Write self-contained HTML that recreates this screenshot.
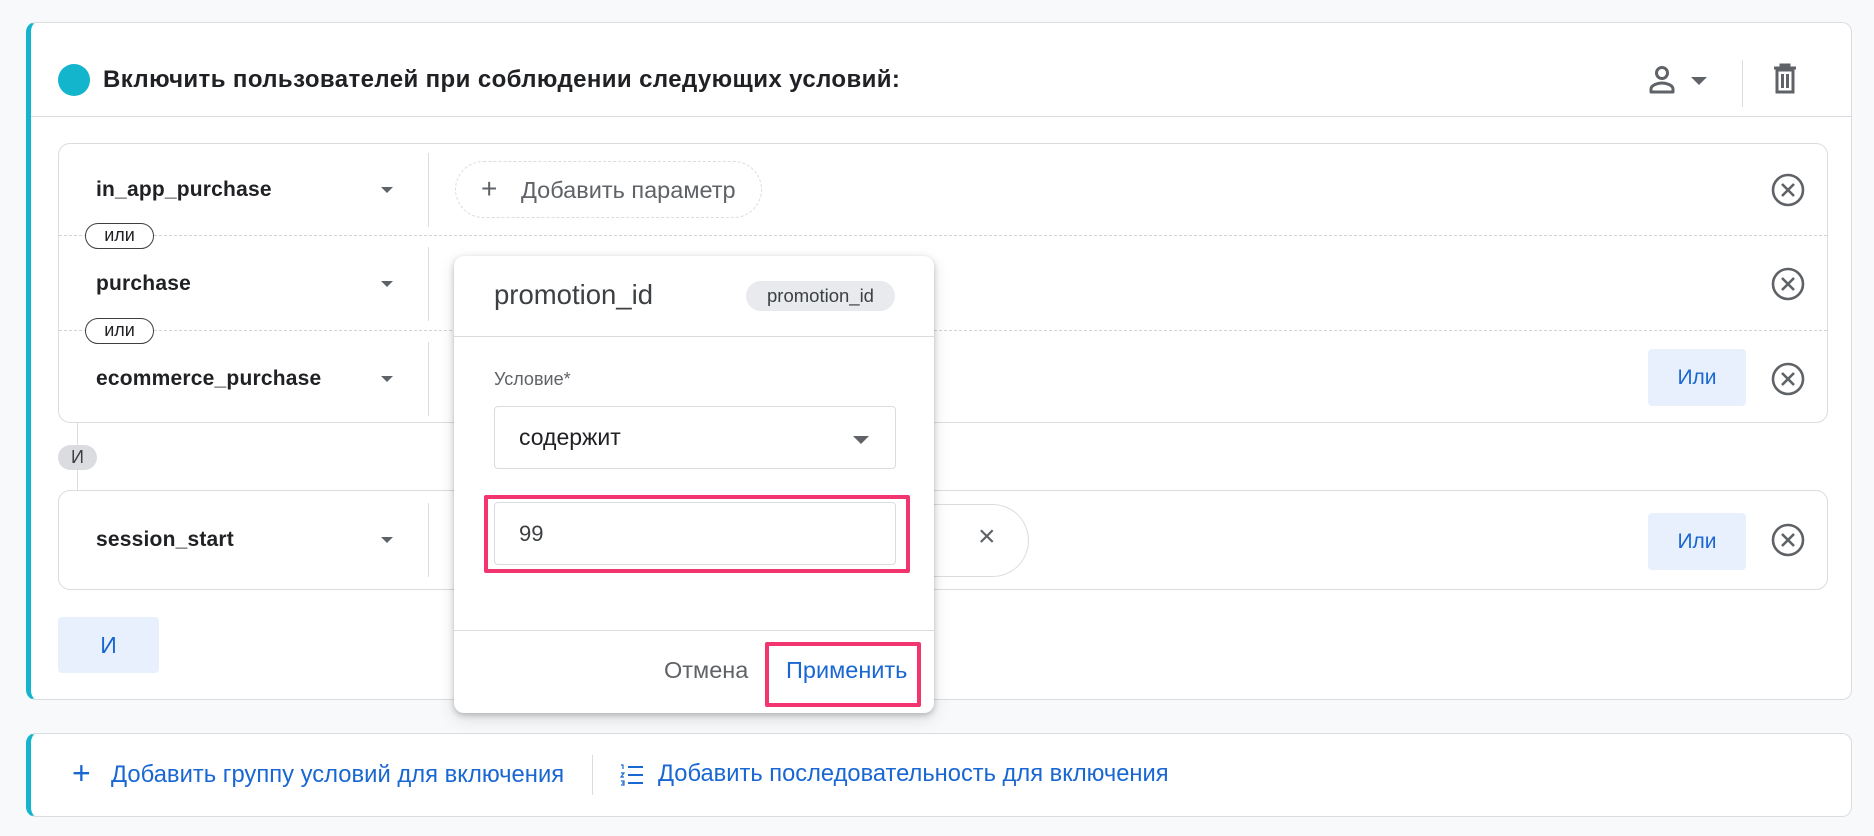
<!DOCTYPE html>
<html><head><meta charset="utf-8"><style>
*{box-sizing:border-box;margin:0;padding:0}
body{width:1874px;height:836px;background:#f8f9fa;font-family:"Liberation Sans",Roboto,sans-serif;color:#202124;position:relative;overflow:hidden}
.abs{position:absolute}
.card{position:absolute;background:#fff;border:1px solid #dadce0;border-left:5px solid #12b5cb;border-radius:10px}
.grp{position:absolute;border:1px solid #dadce0;border-radius:12px;background:#fff}
.ev{position:absolute;left:96px;font-size:21px;font-weight:bold;color:#202124;transform:translateY(-50%);letter-spacing:0.2px}
.caret{position:absolute;width:0;height:0;border-left:6px solid transparent;border-right:6px solid transparent;border-top:6px solid #5f6368}
.vd{position:absolute;width:1px;background:#dadce0}
.pill{position:absolute;border:1.5px solid #3c4043;border-radius:13px;font-size:18px;color:#202124;text-align:center;line-height:22px;background:#fff}
.orb{position:absolute;width:98px;height:57px;background:#e8f0fe;border-radius:4px;color:#1967d2;font-size:21px;text-align:center;line-height:57px}
.dash{position:absolute;border-top:1px dashed #d0d3d7;height:0}
</style></head><body>

<div class="card" style="left:26px;top:22px;width:1826px;height:678px"></div>
<div class="abs" style="left:58px;top:64px;width:32px;height:32px;border-radius:50%;background:#12b5cb"></div>
<div class="abs" style="left:103px;top:66px;font-size:24px;font-weight:bold;color:#202124;letter-spacing:0.4px">Включить пользователей при соблюдении следующих условий:</div>
<svg class="abs" style="left:1647px;top:64px" width="30" height="32" viewBox="0 0 30 32"><circle cx="15" cy="9" r="5.5" fill="none" stroke="#5f6368" stroke-width="3"/><path d="M4 28v-3c0-4 7-6 11-6s11 2 11 6v3z" fill="none" stroke="#5f6368" stroke-width="3" stroke-linejoin="round"/></svg>
<div class="caret" style="left:1691px;top:77px;border-width:8px 8px 0 8px"></div>
<div class="vd" style="left:1742px;top:60px;height:47px"></div>
<svg class="abs" style="left:1772px;top:63px" width="26" height="32" viewBox="0 0 26 32"><path d="M2 5h22M9 5V2h8v3" fill="none" stroke="#5f6368" stroke-width="3"/><path d="M5 7h16v22H5z" fill="none" stroke="#5f6368" stroke-width="3"/><path d="M10.5 11v14M15.5 11v14" stroke="#5f6368" stroke-width="3"/></svg>
<div class="abs" style="left:31px;top:116px;width:1820px;height:1px;background:#dadce0"></div>

<!-- group 1 -->
<div class="grp" style="left:58px;top:143px;width:1770px;height:280px"></div>
<div class="dash" style="left:59px;top:235px;width:1768px"></div>
<div class="dash" style="left:59px;top:330px;width:1768px"></div>
<div class="ev" style="top:190px">in_app_purchase</div>
<div class="ev" style="top:284px">purchase</div>
<div class="ev" style="top:379px">ecommerce_purchase</div>
<div class="caret" style="left:381px;top:187px"></div>
<div class="caret" style="left:381px;top:281px"></div>
<div class="caret" style="left:381px;top:376px"></div>
<div class="vd" style="left:428px;top:153px;height:74px"></div>
<div class="vd" style="left:428px;top:247px;height:74px"></div>
<div class="vd" style="left:428px;top:342px;height:74px"></div>
<div class="pill" style="left:85px;top:223px;width:69px;height:26px">или</div>
<div class="pill" style="left:85px;top:318px;width:69px;height:26px">или</div>
<div class="abs" style="left:455px;top:161px;width:307px;height:57px;border:1px dashed #dadce0;border-radius:29px"></div>
<div class="abs" style="left:481px;top:175px;font-size:28px;color:#5f6368;line-height:28px;font-weight:300">+</div>
<div class="abs" style="left:521px;top:177px;font-size:23.5px;color:#5f6368">Добавить параметр</div>
<div class="orb" style="left:1648px;top:349px">Или</div>

<!-- connector -->
<div class="abs" style="left:77px;top:423px;width:1px;height:67px;background:#dadce0"></div>
<div class="abs" style="left:58px;top:445px;width:39px;height:25px;border-radius:13px;background:#dadce0;font-size:18px;text-align:center;line-height:25px;color:#3c4043">И</div>

<!-- group 2 -->
<div class="grp" style="left:58px;top:490px;width:1770px;height:100px"></div>
<div class="ev" style="top:540px">session_start</div>
<div class="caret" style="left:381px;top:537px"></div>
<div class="vd" style="left:428px;top:503px;height:74px"></div>
<div class="abs" style="left:880px;top:504px;width:149px;height:73px;border:1px solid #dadce0;border-left:none;border-radius:0 37px 37px 0"></div>
<div class="abs" style="left:978px;top:522px;font-size:30px;color:#5f6368;line-height:30px">×</div>
<div class="orb" style="left:1648px;top:513px">Или</div>

<!-- circle x icons -->
<svg class="abs" style="left:1770px;top:172px" width="36" height="36" viewBox="0 0 36 36"><circle cx="18" cy="18" r="15" fill="none" stroke="#5f6368" stroke-width="2.6"/><path d="M12 12l12 12M24 12L12 24" stroke="#5f6368" stroke-width="2.6"/></svg>
<svg class="abs" style="left:1770px;top:266px" width="36" height="36" viewBox="0 0 36 36"><circle cx="18" cy="18" r="15" fill="none" stroke="#5f6368" stroke-width="2.6"/><path d="M12 12l12 12M24 12L12 24" stroke="#5f6368" stroke-width="2.6"/></svg>
<svg class="abs" style="left:1770px;top:361px" width="36" height="36" viewBox="0 0 36 36"><circle cx="18" cy="18" r="15" fill="none" stroke="#5f6368" stroke-width="2.6"/><path d="M12 12l12 12M24 12L12 24" stroke="#5f6368" stroke-width="2.6"/></svg>
<svg class="abs" style="left:1770px;top:522px" width="36" height="36" viewBox="0 0 36 36"><circle cx="18" cy="18" r="15" fill="none" stroke="#5f6368" stroke-width="2.6"/><path d="M12 12l12 12M24 12L12 24" stroke="#5f6368" stroke-width="2.6"/></svg>

<div class="orb" style="left:58px;top:617px;width:101px;height:56px;line-height:56px;font-size:23px">И</div>

<!-- card 2 -->
<div class="card" style="left:26px;top:733px;width:1826px;height:84px"></div>
<div class="abs" style="left:72px;top:757px;font-size:32px;color:#1967d2;line-height:32px;font-weight:300">+</div>
<div class="abs" style="left:111px;top:761px;font-size:23.8px;color:#1967d2">Добавить группу условий для включения</div>
<div class="vd" style="left:592px;top:755px;height:40px"></div>
<svg class="abs" style="left:620px;top:764px" width="24" height="22" viewBox="0 0 24 22"><path d="M8 3h15M8 11h15M8 19h15" stroke="#1967d2" stroke-width="2"/><path d="M1 1h2v4M1 9h3l-3 4h3M1 17h3v4H1M2 19h2" fill="none" stroke="#1967d2" stroke-width="1.2"/></svg>
<div class="abs" style="left:658px;top:761px;font-size:23.7px;color:#1967d2">Добавить последовательность для включения</div>

<!-- popover -->
<div class="abs" style="left:454px;top:256px;width:480px;height:457px;background:#fff;border-radius:10px;box-shadow:0 2px 6px rgba(60,64,67,.3),0 6px 16px rgba(60,64,67,.15)"></div>
<div class="abs" style="left:494px;top:279px;font-size:27.5px;color:#3c4043">promotion_id</div>
<div class="abs" style="left:746px;top:281px;width:149px;height:30px;border-radius:15px;background:#e8eaed;font-size:18.5px;text-align:center;line-height:30px;color:#3c4043">promotion_id</div>
<div class="abs" style="left:454px;top:336px;width:480px;height:1px;background:#dadce0"></div>
<div class="abs" style="left:494px;top:369px;font-size:18px;color:#5f6368">Условие*</div>
<div class="abs" style="left:494px;top:406px;width:402px;height:63px;border:1px solid #dadce0;border-radius:4px"></div>
<div class="abs" style="left:519px;top:424px;font-size:23px;color:#202124">содержит</div>
<div class="caret" style="left:853px;top:436px;border-width:8px 8px 0 8px"></div>
<div class="abs" style="left:484px;top:495px;width:426px;height:78px;border:4px solid #f2346f;border-radius:2px"></div>
<div class="abs" style="left:494px;top:502px;width:402px;height:63px;border:1px solid #dadce0;border-radius:4px"></div>
<div class="abs" style="left:519px;top:521px;font-size:22px;color:#3c4043">99</div>
<div class="abs" style="left:454px;top:630px;width:480px;height:1px;background:#dadce0"></div>
<div class="abs" style="left:664px;top:657px;font-size:23.5px;color:#5f6368">Отмена</div>
<div class="abs" style="left:765px;top:642px;width:156px;height:65px;border:4px solid #f2346f;border-radius:2px"></div>
<div class="abs" style="left:786px;top:657px;font-size:23.5px;color:#1967d2">Применить</div>
</body></html>
